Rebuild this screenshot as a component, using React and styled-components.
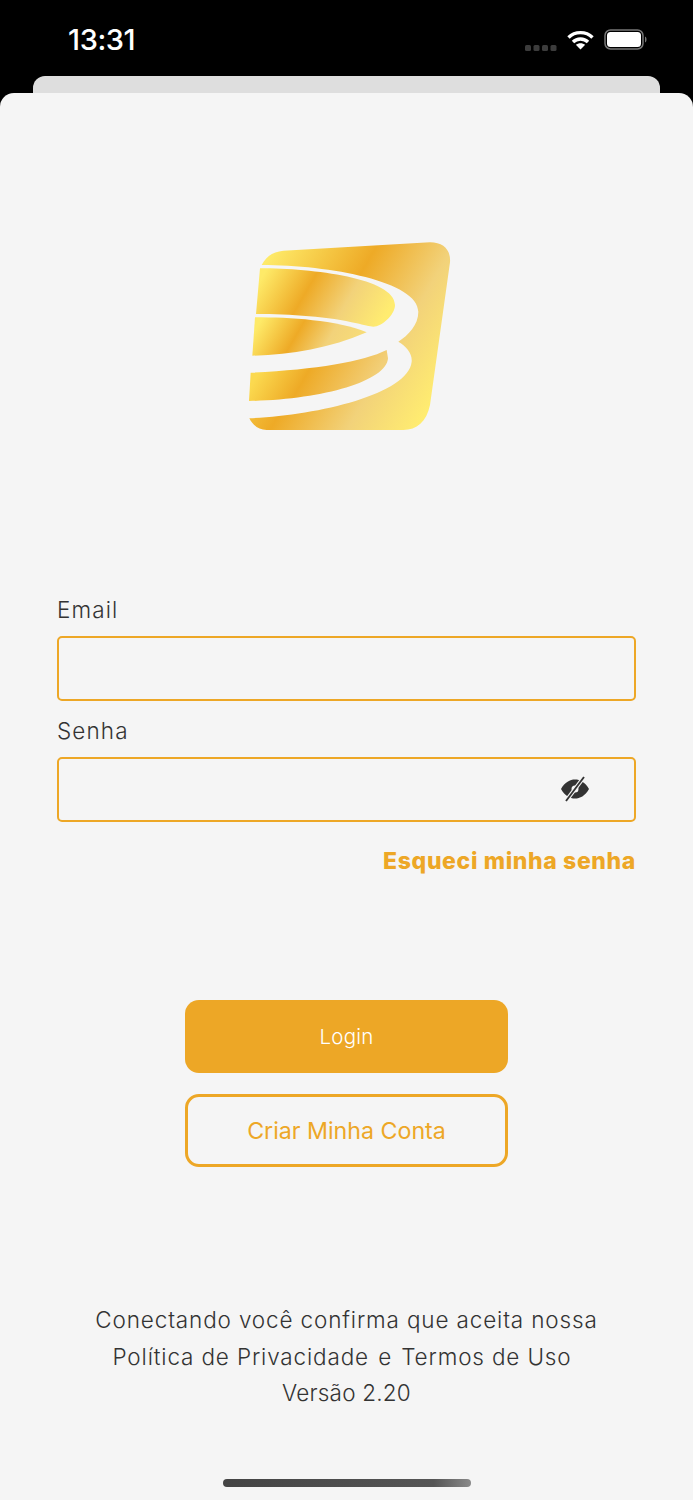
import styled, { createGlobalStyle } from 'styled-components';

const GlobalStyle = createGlobalStyle`
  html, body {
    margin: 0;
    padding: 0;
    background: #000;
  }
`;

const Page = styled.div`
  width: 693px;
  height: 1500px;
  background: #000;
  display: flex;
  flex-direction: column;
  overflow: hidden;
  font-family: Inter, "Liberation Sans", sans-serif;
`;

const StatusBar = styled.div`
  height: 76px;
  box-sizing: border-box;
  padding: 20px 45px 0 68px;
  display: flex;
  justify-content: space-between;
  align-items: flex-start;
`;

const Clock = styled.div`
  font-size: 29px;
  line-height: 38px;
  font-weight: 500;
  letter-spacing: -0.4px;
  color: #fff;
  margin-top: 1px;
`;

const StatusIcons = styled.div`
  display: flex;
  align-items: center;
  gap: 10px;
  margin-top: 8px;
`;

const BackCard = styled.div`
  height: 17px;
  margin: 0 33px;
  background: #dedede;
  border-radius: 12px 12px 0 0;
  flex: none;
`;

const Sheet = styled.div`
  flex: 1;
  background: #f5f5f5;
  border-radius: 14px 14px 0 0;
  display: flex;
  flex-direction: column;
  align-items: center;
`;

const LogoWrap = styled.div`
  margin-top: 132px;
  margin-left: 6px;
  height: 220px;
`;

const Form = styled.div`
  margin-top: 150px;
  width: 579px;
  display: flex;
  flex-direction: column;
`;

const Label = styled.label`
  display: block;
  font-size: 22.5px;
  line-height: 30px;
  font-weight: 300;
  color: #333;
  margin-bottom: 11px;
  letter-spacing: 1.1px;
`;

const Field = styled.div`
  height: 65px;
  box-sizing: border-box;
  border: 2px solid #eda726;
  border-radius: 5px;
  margin-bottom: 15px;
  display: flex;
  align-items: center;
  justify-content: flex-end;
  padding-right: 44px;
`;

const ForgotLink = styled.a`
  font-size: 23px;
  line-height: 30px;
  font-weight: 800;
  color: #eda726;
  text-align: right;
  margin-top: 9px;
  letter-spacing: 0.63px;
`;

const Actions = styled.div`
  margin-top: 124px;
  width: 323px;
  display: flex;
  flex-direction: column;
  gap: 21px;
`;

const Button = styled.button`
  height: 73px;
  box-sizing: border-box;
  border-radius: 14px;
  border: ${({ $outline }) => ($outline ? '3px solid #eda726' : 'none')};
  background: ${({ $outline }) => ($outline ? 'transparent' : '#eda726')};
  color: ${({ $outline }) => ($outline ? '#eda726' : '#fff')};
  font-family: Inter, sans-serif;
  font-size: ${({ $outline }) => ($outline ? '23.2px' : '20.5px')};
  font-weight: ${({ $outline }) => ($outline ? 400 : 300)};
  letter-spacing: ${({ $outline }) => ($outline ? '0' : '0.2px')};
  padding: 0;
`;

const Footer = styled.div`
  margin-top: 135px;
  text-align: center;
  font-size: 22.5px;
  line-height: 36.5px;
  font-weight: 300;
  color: #333;
`;

const FooterLine = styled.div`
  letter-spacing: ${({ $spacing }) => $spacing || '0.85px'};
  margin-right: ${({ $shift }) => $shift || '0'};
`;

const Joiner = styled.span`
  margin: 0 2px;
`;

const HomeBar = styled.div`
  margin-top: 67px;
  width: 248px;
  height: 8px;
  border-radius: 4px;
  background: linear-gradient(90deg, #444 0%, #555 85%, #8a8a8a 100%);
`;

const SignalSvg = styled.svg`
  margin-top: 16px;
`;

const EyeSvg = styled.svg`
  margin-bottom: 2px;
`;

const Logo = () => (
  <svg width="240" height="220" viewBox="0 0 720 660">
    <defs>
      <linearGradient id="goldA" gradientUnits="userSpaceOnUse" x1="129" y1="75" x2="684" y2="397">
        <stop offset="0" stopColor="#feea68" />
        <stop offset="0.41" stopColor="#eeaa26" />
        <stop offset="0.72" stopColor="#f2d27a" />
        <stop offset="1" stopColor="#ffec70" />
      </linearGradient>
      <linearGradient id="goldB" gradientUnits="userSpaceOnUse" x1="140" y1="81" x2="467" y2="271">
        <stop offset="0" stopColor="#feea68" />
        <stop offset="0.36" stopColor="#eeaa26" />
        <stop offset="0.68" stopColor="#f2d27a" />
        <stop offset="1" stopColor="#ffec70" />
      </linearGradient>
      <linearGradient id="goldC" gradientUnits="userSpaceOnUse" x1="194" y1="112" x2="440" y2="255">
        <stop offset="0" stopColor="#feea68" />
        <stop offset="0.4" stopColor="#eeaa26" />
        <stop offset="0.72" stopColor="#f2d27a" />
        <stop offset="1" stopColor="#f7dc78" />
      </linearGradient>
      <linearGradient id="goldD" gradientUnits="userSpaceOnUse" x1="257" y1="149" x2="524" y2="304">
        <stop offset="0" stopColor="#fbd94f" />
        <stop offset="0.41" stopColor="#eeaa26" />
        <stop offset="1" stopColor="#f2cf78" />
      </linearGradient>
    </defs>
    <path
      fill="url(#goldA)"
      d="M95 120 C110 92 130 80 160 77 L600 52 C640 52 663 75 660 112 L600 540 C590 590 560 615 520 615 L110 615 C85 615 68 600 58 580 C250 572 535 510 545 410 C547 385 530 365 505 350 C535 330 565 300 565 260 C565 170 300 120 95 120 Z"
    />
    <path
      fill="url(#goldB)"
      d="M90 130 C250 130 495 160 495 240 C495 270 455 305 430 305 C420 305 400 300 380 295 C300 275 180 267 78 267 Z"
    />
    <path fill="url(#goldC)" d="M75 277 C180 277 320 285 410 322 C300 370 180 390 67 392 Z" />
    <path
      fill="url(#goldD)"
      d="M62 443 C250 435 400 410 470 375 L474 400 C470 470 270 525 57 528 Z"
    />
  </svg>
);

const EyeOff = () => (
  <EyeSvg width="30" height="26" viewBox="0 0 30 26">
    <path
      fill="#333"
      fillRule="evenodd"
      d="M1 13 C5 6 10 3.5 15 3.5 C20 3.5 25 6 29 13 C25 20 20 22.5 15 22.5 C10 22.5 5 20 1 13 Z M15 9.5 A3.5 3.5 0 1 0 15 16.5 A3.5 3.5 0 1 0 15 9.5 Z"
    />
    <line x1="6" y1="25" x2="24" y2="1" stroke="#f5f5f5" strokeWidth="4" />
    <line x1="6" y1="25" x2="24" y2="1" stroke="#333" strokeWidth="1.8" />
  </EyeSvg>
);

const WifiIcon = () => (
  <svg width="27" height="20" viewBox="0 0 27 20" fill="none" stroke="#fff" strokeWidth="3.4">
    <path d="M1.5 7.5 C8 1 19 1 25.5 7.5" />
    <path d="M6 12 C10 8 17 8 21 12" />
    <path fill="#fff" stroke="none" d="M13.5 19.5 L8.8 14.7 C11.5 12.6 15.5 12.6 18.2 14.7 Z" />
  </svg>
);

const BatteryIcon = () => (
  <svg width="44" height="22" viewBox="0 0 44 22">
    <rect x="1" y="1" width="38" height="19" rx="5.5" fill="none" stroke="#777" strokeWidth="1.5" />
    <rect x="3" y="3" width="34" height="15" rx="3.5" fill="#fff" />
    <path d="M41 7.5 C43 8 43 13 41 13.5 Z" fill="#777" />
  </svg>
);

const SignalDots = () => (
  <SignalSvg width="32" height="8" viewBox="0 0 32 8">
    {[0, 8.5, 17, 25.5].map((x) => (
      <rect key={x} x={x} y="1" width="6" height="6" rx="1.5" fill="#3c3c3c" />
    ))}
  </SignalSvg>
);

export default function App() {
  return (
    <Page>
      <GlobalStyle />
      <StatusBar>
        <Clock>13:31</Clock>
        <StatusIcons>
          <SignalDots />
          <WifiIcon />
          <BatteryIcon />
        </StatusIcons>
      </StatusBar>
      <BackCard />
      <Sheet>
        <LogoWrap>
          <Logo />
        </LogoWrap>
        <Form>
          <Label>Email</Label>
          <Field />
          <Label>Senha</Label>
          <Field>
            <EyeOff />
          </Field>
          <ForgotLink>Esqueci minha senha</ForgotLink>
        </Form>
        <Actions>
          <Button>Login</Button>
          <Button $outline>Criar Minha Conta</Button>
        </Actions>
        <Footer>
          <FooterLine>Conectando você confirma que aceita nossa</FooterLine>
          <FooterLine $shift="9px">
            Política de Privacidade <Joiner>e</Joiner> Termos de Uso
          </FooterLine>
          <FooterLine $spacing="0.2px">Versão 2.20</FooterLine>
        </Footer>
        <HomeBar />
      </Sheet>
    </Page>
  );
}
